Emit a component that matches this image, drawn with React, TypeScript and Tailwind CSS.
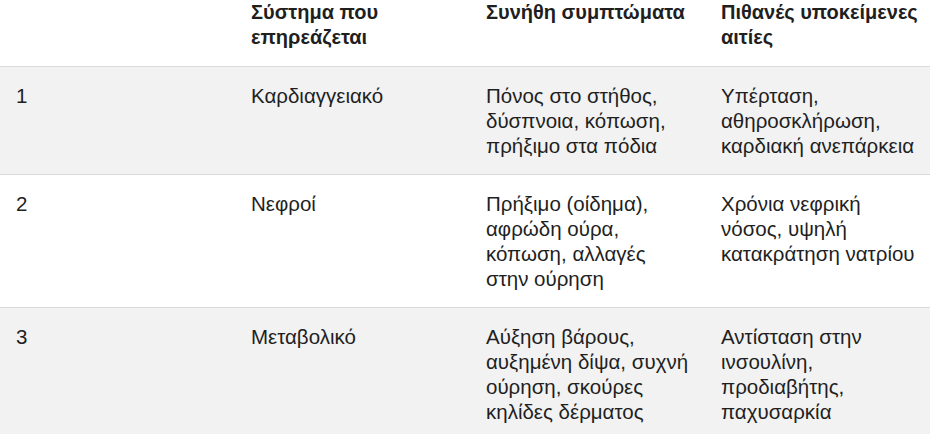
import React from 'react';

// lines follow the wrapping of the original table
const rows = [
  {
    n: '1',
    system: ['Καρδιαγγειακό'],
    symptoms: ['Πόνος στο στήθος,', 'δύσπνοια, κόπωση,', 'πρήξιμο στα πόδια'],
    causes: ['Υπέρταση,', 'αθηροσκλήρωση,', 'καρδιακή ανεπάρκεια'],
  },
  {
    n: '2',
    system: ['Νεφροί'],
    symptoms: ['Πρήξιμο (οίδημα),', 'αφρώδη ούρα,', 'κόπωση, αλλαγές', 'στην ούρηση'],
    causes: ['Χρόνια νεφρική', 'νόσος, υψηλή', 'κατακράτηση νατρίου'],
  },
  {
    n: '3',
    system: ['Μεταβολικό'],
    symptoms: ['Αύξηση βάρους,', 'αυξημένη δίψα, συχνή', 'ούρηση, σκούρες', 'κηλίδες δέρματος'],
    causes: ['Αντίσταση στην', 'ινσουλίνη,', 'προδιαβήτης,', 'παχυσαρκία'],
  },
];

function Lines({ lines }: { lines: string[] }) {
  return (
    <>
      {lines.map((l, i) => (
        <React.Fragment key={i}>
          {i > 0 && <br />}
          {l}
        </React.Fragment>
      ))}
    </>
  );
}

export default function App() {
  return (
    <div className="w-[930px] h-[434px] overflow-hidden bg-white font-['Liberation_Sans',Arial,sans-serif] leading-[25px] text-[#1f1f1f]">
      <table className="w-[940px] table-fixed border-collapse">
        <colgroup>
          <col className="w-[235px]" />
          <col className="w-[235px]" />
          <col className="w-[235px]" />
          <col className="w-[235px]" />
        </colgroup>
        <thead>
          <tr className="border-b border-[#dadada] text-left text-[20px]">
            <th className="px-4 pt-0 pb-4 align-top font-bold"></th>
            <th className="px-4 pt-0 pb-4 align-top font-bold">Σύστημα που<br />επηρεάζεται</th>
            <th className="px-4 pt-0 pb-4 align-top font-bold">Συνήθη συμπτώματα</th>
            <th className="px-4 pt-0 pb-4 align-top font-bold">Πιθανές υποκείμενες<br />αιτίες</th>
          </tr>
        </thead>
        <tbody className="text-[20.5px]">
          {rows.map((r, i) => (
            <tr
              key={r.n}
              className={`border-b border-[#dadada] ${i % 2 === 0 ? 'bg-[#f2f2f2]' : 'bg-white'}`}
            >
              <td className="px-4 py-4 align-top">{r.n}</td>
              <td className="px-4 py-4 align-top whitespace-nowrap"><Lines lines={r.system} /></td>
              <td className="px-4 py-4 align-top whitespace-nowrap"><Lines lines={r.symptoms} /></td>
              <td className="px-4 py-4 align-top whitespace-nowrap"><Lines lines={r.causes} /></td>
            </tr>
          ))}
        </tbody>
      </table>
    </div>
  );
}
